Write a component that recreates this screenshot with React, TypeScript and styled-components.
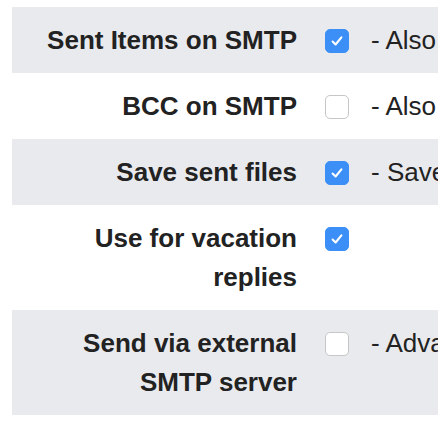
import styled, { createGlobalStyle } from "styled-components";

const GlobalStyle = createGlobalStyle`
  html, body {
    margin: 0;
    padding: 0;
    background: #ffffff;
    overflow: hidden;
  }
  body {
    font-family: "Liberation Sans", Arial, Helvetica, sans-serif;
    color: #222222;
  }
`;

type Setting = {
  label: string;
  checked: boolean;
  description?: string;
};

const settings: Setting[] = [
  { label: "Sent Items on SMTP", checked: true, description: "- Also store sent items on the SMTP server" },
  { label: "BCC on SMTP", checked: false, description: "- Also send a BCC copy via SMTP" },
  { label: "Save sent files", checked: true, description: "- Save attachments of sent messages" },
  { label: "Use for vacation replies", checked: true },
  { label: "Send via external SMTP server", checked: false, description: "- Advanced: relay outgoing mail" },
];

const CheckMark = () => (
  <svg width="14" height="14" viewBox="0 0 14 14" fill="none">
    <path d="M2.6 7.6 L5.6 10.5 L11.4 3.4" stroke="#ffffff" strokeWidth="2.1" strokeLinecap="round" strokeLinejoin="round" />
  </svg>
);

const App = () => {
  return (
    <>
      <GlobalStyle />
      <Table>
        {settings.map((s, i) => (
          <Row key={s.label} $striped={i % 2 === 0}>
            <Label>{s.label}</Label>
            <Box $checked={s.checked}>{s.checked && <CheckMark />}</Box>
            {s.description && <Description>{s.description}</Description>}
          </Row>
        ))}
      </Table>
    </>
  );
};

export default App;

const Table = styled.div`
  display: flex;
  flex-direction: column;
  padding: 7px 0 0 12px;
  width: 426px;
`;

const Row = styled.div<{ $striped: boolean }>`
  display: flex;
  align-items: flex-start;
  padding: 14px 0 13px;
  background: ${(p) => (p.$striped ? "#e9eaee" : "#ffffff")};
  font-size: 26px;
  line-height: 39px;
  white-space: nowrap;
  overflow: hidden;
`;

const Label = styled.div`
  flex: 0 0 285px;
  box-sizing: border-box;
  padding-left: 16px;
  text-align: right;
  font-weight: 700;
  white-space: normal;
`;

const Box = styled.span<{ $checked: boolean }>`
  flex: 0 0 auto;
  display: flex;
  align-items: center;
  justify-content: center;
  box-sizing: border-box;
  width: 24px;
  height: 24px;
  margin: 8px 0 0 28px;
  border-radius: 5px;
  background: ${(p) => (p.$checked ? "#3b8ff6" : "#ffffff")};
  border: 1px solid ${(p) => (p.$checked ? "#3b8ff6" : "#c6c6c6")};
`;

const Description = styled.span`
  margin-left: 22px;
  font-weight: 400;
`;
